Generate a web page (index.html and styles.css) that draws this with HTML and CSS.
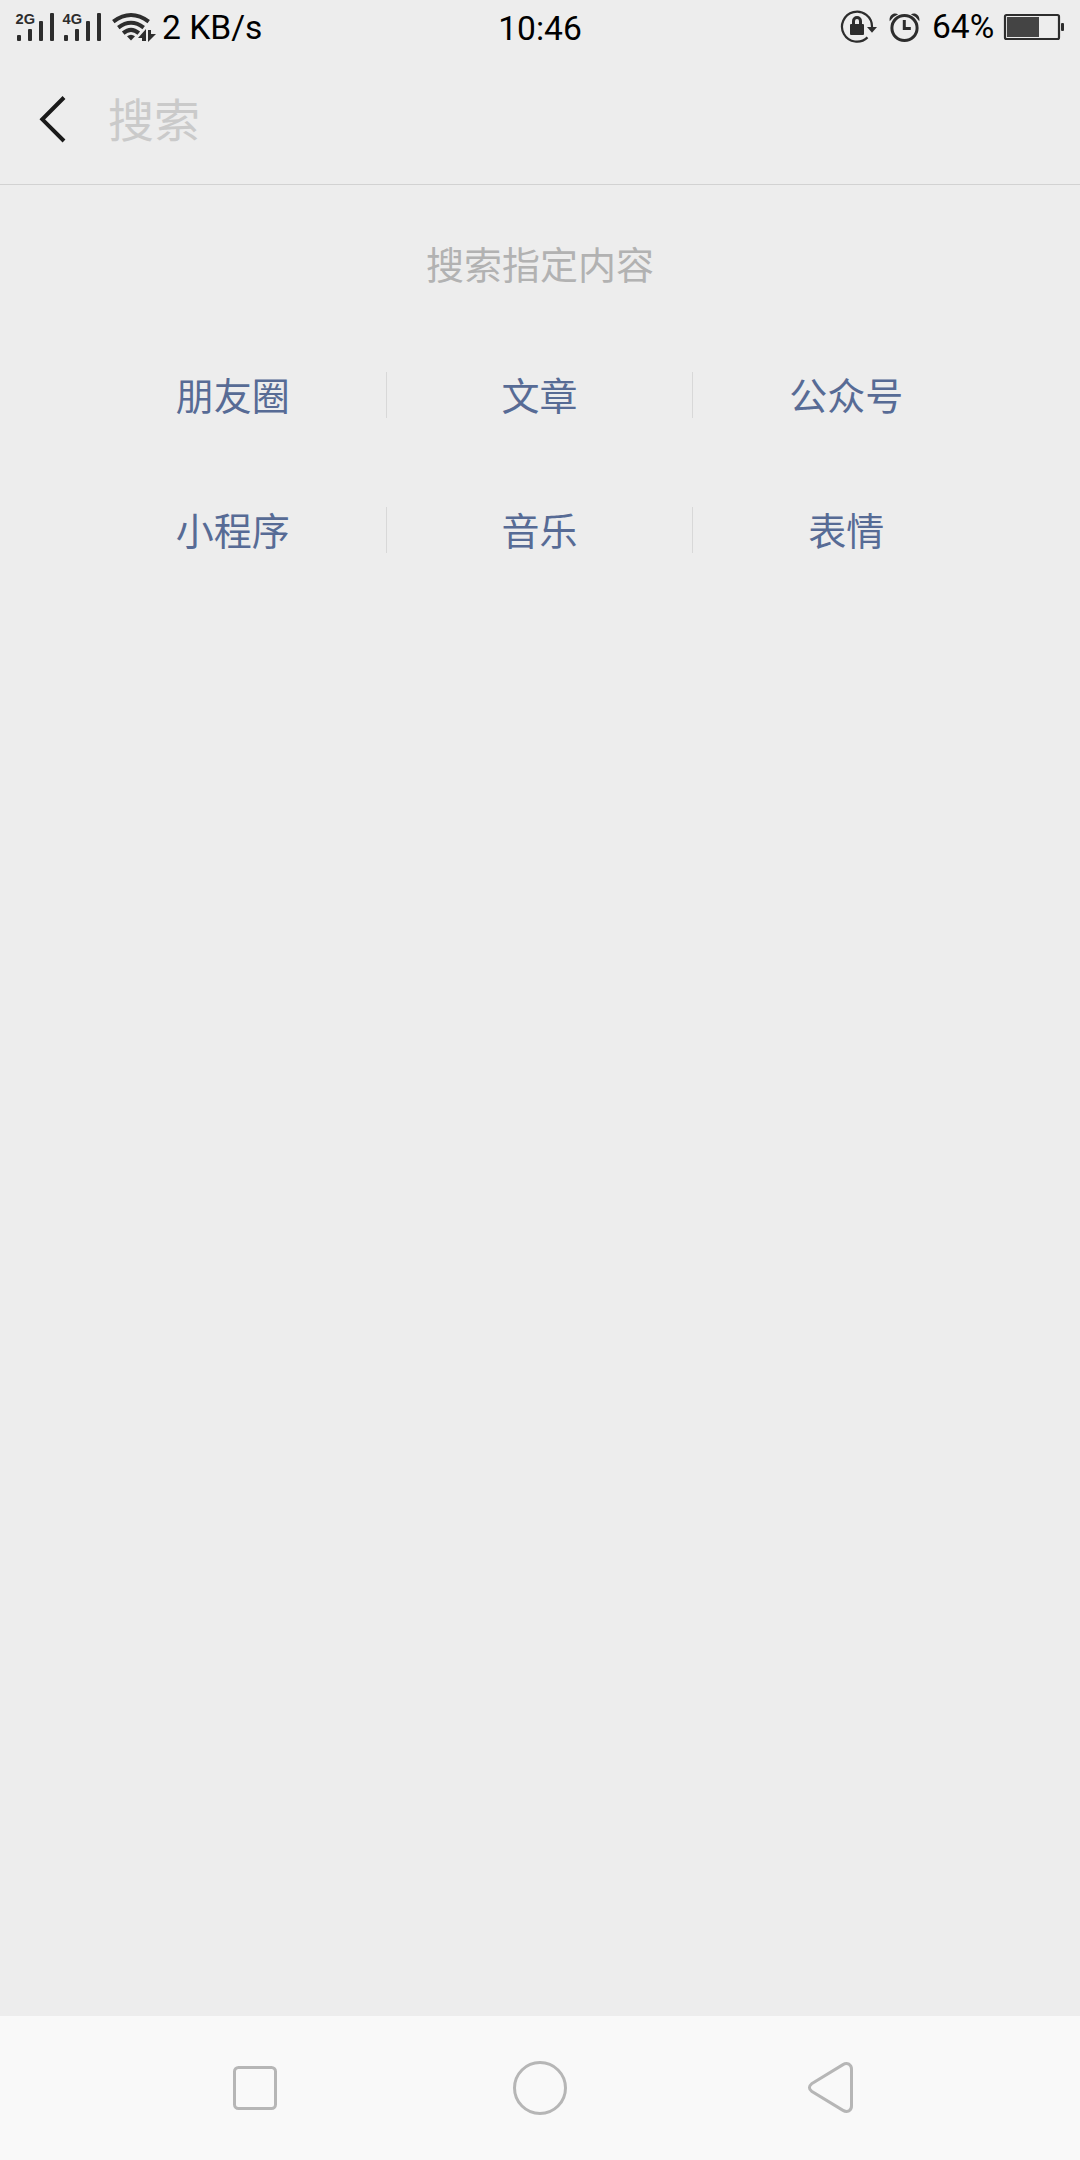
FILE: index.html
```html
<!DOCTYPE html>
<html lang="zh-CN">
<head>
<meta charset="utf-8">
<title>搜索</title>
<link rel="stylesheet" href="styles.css">
</head>
<body>
<div class="screen">
  <div class="status">
    <div class="status-left">
      <svg class="signal" width="42" height="56" viewBox="14 0 42 56">
        <text class="net" x="15.5" y="24" textLength="19.5" lengthAdjust="spacingAndGlyphs">2G</text>
        <rect x="17" y="35" width="4" height="6" rx="1"/><rect x="28" y="29" width="4" height="12" rx="1"/><rect x="39" y="21" width="4" height="20" rx="1"/><rect x="50" y="13" width="4" height="28" rx="1"/>
      </svg>
      <svg class="signal" width="42" height="56" viewBox="61 0 42 56">
        <text class="net" x="62.5" y="24" textLength="19.5" lengthAdjust="spacingAndGlyphs">4G</text>
        <rect x="64" y="35" width="4" height="6" rx="1"/><rect x="75" y="29" width="4" height="12" rx="1"/><rect x="86" y="21" width="4" height="20" rx="1"/><rect x="97" y="13" width="4" height="28" rx="1"/>
      </svg>
      <svg class="wifi" width="46" height="56" viewBox="110 0 46 56">
        <path class="arc" d="M113.3 21.6Q131 8.4 148.7 21.6M118.3 27.6Q131 17.8 143.7 27.6M123.2 33.1Q131 26.6 138.8 33.1"/>
        <path d="M127 36.3Q131 33 135 36.3L131 40.5Z"/>
        <path d="M146 29v12h-4v-3h-4zM148 30v12l8-8h-5v-4z"/>
      </svg>
      <span class="speed">2 KB/s</span>
    </div>
    <span class="clock">10:46</span>
    <div class="status-right">
      <svg width="38" height="56" viewBox="840 0 38 56">
        <path class="ring" d="M867.5 37.4A15 15 0 1 1 872 27"/>
        <path d="M867 27h10l-5 5.8z"/>
        <rect x="850" y="24" width="14" height="11" rx="1"/>
        <path class="shackle" d="M853.5 25v-4a3.5 3.5 0 0 1 7 0v4"/>
      </svg>
      <svg class="alarm" width="32" height="56" viewBox="889 0 32 56">
        <circle class="face" cx="904.5" cy="28" r="12.6"/>
        <path class="hands" d="M904.3 20v8.5h6.5"/>
        <path d="M889.7 21.2C888.6 15.5 893.5 11.7 898.2 14.3Q892.8 16.5 889.7 21.2ZM919.3 21.2C920.4 15.5 915.5 11.7 910.8 14.3Q916.2 16.5 919.3 21.2Z"/>
      </svg>
      <span class="percent">64%</span>
      <svg width="62" height="56" viewBox="1003 0 62 56">
        <rect class="case" x="1005" y="15" width="54" height="24" rx="1.5"/>
        <rect class="charge" x="1007" y="17" width="32" height="20"/>
        <rect x="1061" y="23" width="3" height="8" rx="1"/>
      </svg>
    </div>
  </div>
  <header class="search">
    <svg class="back" width="30" height="48" viewBox="38 95 30 48"><path d="M64 97.5L42.3 119.3L64 141"/></svg>
    <span class="placeholder">搜索</span>
  </header>
  <main class="content">
    <div class="hint">搜索指定内容</div>
    <div class="links">
      <a>朋友圈</a><a>文章</a><a>公众号</a>
      <a>小程序</a><a>音乐</a><a>表情</a>
    </div>
  </main>
  <nav class="nav">
    <svg width="44" height="56" viewBox="233 2060 44 56"><rect x="234.5" y="2067.5" width="41" height="41" rx="4"/></svg>
    <svg class="home" width="56" height="56" viewBox="512 2060 56 56"><circle cx="540" cy="2088" r="25.5"/></svg>
    <svg width="48" height="56" viewBox="806 2060 48 56"><path d="M811.6 2083.8L843 2064.6Q846 2062.8 849 2064.2Q851.5 2065.8 851.5 2069V2106Q851.5 2109.2 849 2110.8Q846 2112.2 843 2110.4L811.6 2091.2Q807.2 2087.5 811.6 2083.8Z"/></svg>
  </nav>
</div>
</body>
</html>
```
FILE: styles.css
```css
body {
  margin: 0;
}

.screen {
  display: flex;
  flex-direction: column;
  width: 1080px;
  height: 2160px;
  background: #ededed;
  font-family: Roboto, "Noto Sans CJK SC", sans-serif;
}

svg {
  display: block;
  flex: none;
  fill: #2d2d2d;
}

.status {
  display: grid;
  grid-template-columns: 1fr auto 1fr;
  height: 56px;
  line-height: 58px;
  font-size: 33.6px;
  color: #000;
  white-space: nowrap;
}

.status-left,
.status-right {
  display: flex;
}

.status-left {
  padding-left: 14px;
}

.status-right {
  justify-content: flex-end;
  padding-right: 15px;
}

.signal {
  margin-right: 5px;
}

.net {
  font: bold 15.5px "Liberation Sans", sans-serif;
}

.wifi {
  margin: 0 6px 0 2px;
}

.speed {
  line-height: 56px;
}

.arc {
  fill: none;
  stroke: #2d2d2d;
  stroke-width: 4;
}

.ring,
.shackle,
.face,
.hands,
.case {
  fill: none;
  stroke: #2d2d2d;
  stroke-width: 2.2;
}

.shackle,
.face,
.hands {
  stroke-width: 3;
}

.charge {
  fill: #444;
}

.alarm {
  margin: 0 11px;
}

.percent {
  width: 71px;
  font-size: 33.5px;
  line-height: 54px;
}

.search {
  display: flex;
  align-items: center;
  box-sizing: border-box;
  height: 129px;
  padding: 0 38px 3px;
  border-bottom: 1px solid #d2d2d2;
}

.back {
  fill: none;
  stroke: #1a1a1a;
  stroke-width: 4;
}

.placeholder {
  margin-left: 40px;
  padding-top: 4px;
  font-size: 46px;
  line-height: 60px;
  color: #cacaca;
}

.content {
  flex: 1;
  padding: 53px 80px 0;
  font-size: 38px;
}

.hint {
  line-height: 56px;
  text-align: center;
  color: #b2b2b2;
}

.links {
  display: grid;
  grid-template-columns: repeat(3, 1fr);
  row-gap: 89px;
  margin-top: 78px;
}

.links a {
  height: 46px;
  border-right: 1px solid #d8d8d8;
  line-height: 50px;
  text-align: center;
  color: #576b95;
}

.links a:nth-child(3n) {
  border-right-color: transparent;
}

.nav {
  display: flex;
  align-items: center;
  justify-content: space-between;
  box-sizing: border-box;
  height: 144px;
  padding: 0 226px 0 233px;
  background: #f9f9f9;
}

.nav svg {
  fill: none;
  stroke: #b6b6b6;
  stroke-width: 3;
}

.nav .home {
  margin-right: 3px;
}
```
